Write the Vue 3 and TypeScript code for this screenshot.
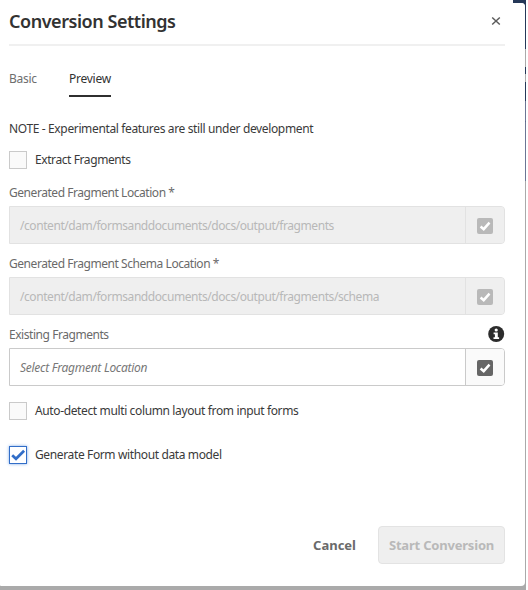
<script setup lang="ts">
import { ref } from 'vue'

interface PathField {
  id: string
  label: string
  text: string
  disabled: boolean
  info: boolean
}

const activeTab = ref('Preview')
const tabs = ['Basic', 'Preview']
const fields: PathField[] = [
  { id: 'location', label: 'Generated Fragment Location *', text: '/content/dam/formsanddocuments/docs/output/fragments', disabled: true, info: false },
  { id: 'schema', label: 'Generated Fragment Schema Location *', text: '/content/dam/formsanddocuments/docs/output/fragments/schema', disabled: true, info: false },
  { id: 'existing', label: 'Existing Fragments', text: 'Select Fragment Location', disabled: false, info: true },
]
const extract = ref(false)
const autoDetect = ref(false)
const withoutModel = ref(true)
</script>

<template>
  <div class="stage">
    <main class="dialog">
      <header class="head">
        <h1>Conversion Settings</h1>
        <button class="close" aria-label="Close">
          <svg width="10" height="10" viewBox="0 0 10 10"><path d="M1.2 1.5 8.8 8.5M8.8 1.5 1.2 8.5" fill="none" stroke="#5c5c5c" stroke-width="1.5" /></svg>
        </button>
      </header>

      <nav class="tabs">
        <button v-for="t in tabs" :key="t" class="tab" :class="[t.toLowerCase(), { active: t === activeTab }]" @click="activeTab = t">{{ t }}</button>
      </nav>

      <p class="note">NOTE - Experimental features are still under development</p>

      <div class="check" @click="extract = !extract">
        <span class="box" :class="{ on: extract }" />
        <span class="extract">Extract Fragments</span>
      </div>

      <section v-for="f in fields" :key="f.id" class="field" :class="[f.id, { disabled: f.disabled }]">
        <div class="label">
          <span>{{ f.label }}</span>
          <svg v-if="f.info" width="17" height="16" viewBox="0 0 17 16">
            <circle cx="8.2" cy="8" r="8" fill="#2c2c2c" />
            <circle cx="8.2" cy="4" r="1.6" fill="#fff" />
            <path d="M5.6 6.5h4.2v4.8h1.3v1.7H5.5v-1.7h1.4V8.2H5.6z" fill="#fff" />
          </svg>
        </div>
        <div class="control">
          <span class="value">{{ f.text }}</span>
          <span class="pick">
            <svg width="16" height="16" viewBox="0 0 16 16">
              <rect width="16" height="16" rx="2" class="tile" />
              <path d="M3.6 8.5 6.7 11.2 12.5 4.7" fill="none" class="tick" stroke-width="2.5" />
            </svg>
          </span>
        </div>
      </section>

      <div class="check auto" @click="autoDetect = !autoDetect">
        <span class="box" :class="{ on: autoDetect }" />
        <span>Auto-detect multi column layout from input forms</span>
      </div>
      <div class="check model" @click="withoutModel = !withoutModel">
        <span class="box" :class="{ on: withoutModel }">
          <svg v-if="withoutModel" width="16" height="16" viewBox="0 0 16 16"><path d="M2.2 8.2 6 11.8 14.1 3.8" fill="none" stroke="#326ec8" stroke-width="2.7" /></svg>
        </span>
        <span>Generate Form without data model</span>
      </div>

      <footer class="foot">
        <button class="cancel">Cancel</button>
        <button class="start" disabled>Start Conversion</button>
      </footer>
    </main>
    <div class="backdrop" />
  </div>
</template>

<style>
body {
  margin: 0;
  background: #fff;
}
</style>

<style scoped>
.stage {
  display: flex;
  width: 526px;
  height: 590px;
  background: #aaa;
  font: 12px/18px 'Noto Sans', 'Open Sans', sans-serif;
  color: #3a3a3a;
}
.dialog {
  box-sizing: border-box;
  display: flex;
  flex-direction: column;
  width: 525px;
  height: 586px;
  padding: 0 20px 22px 9px;
  background: #fff;
  border-radius: 0 0 4px 1px;
  position: relative;
}
.dialog::after {
  content: '';
  position: absolute;
  top: 0;
  right: 0;
  width: 12px;
  height: 6px;
  background: radial-gradient(circle at 9px 6px, transparent 3px, #253858 3.5px) right / 3px 6px no-repeat, linear-gradient(#253858 3px, transparent 3px);
  background: linear-gradient(#253858 3px, transparent 3px), radial-gradient(circle at 0 100%, transparent 2.5px, #253858 3.5px) right bottom / 3px 3px no-repeat;
}
.backdrop {
  width: 1px;
  height: 590px;
  background: linear-gradient(#253858 49px, #aaa 49px 67px, #253858 67px 74px, #aaa 74px 82px, #253858 82px 101px, #6b7694 101px 121px, #59658a 121px 122px, #6b7694 122px 181px, #aaa 181px);
}
button {
  margin: 0;
  padding: 0;
  border: 0;
  background: none;
  font: inherit;
  color: inherit;
}
.head {
  display: flex;
  justify-content: space-between;
  align-items: center;
  height: 44px;
  flex: none;
  border-bottom: 2px solid #f0f0f0;
}
h1 {
  margin: 0;
  font-size: 18px;
  font-weight: 600;
  line-height: 24px;
  letter-spacing: -0.46px;
  padding-bottom: 3px;
  color: #323232;
}
.close {
  display: flex;
  margin-right: 4px;
  padding-bottom: 2px;
}
.tabs {
  display: flex;
  gap: 32px;
  margin-top: 24px;
}
.tab {
  box-sizing: border-box;
  height: 27px;
  padding-bottom: 7px;
  border-bottom: 2px solid transparent;
  color: #6e6e6e;
  line-height: 18px;
  letter-spacing: -0.3px;
  width: 28px;
  text-align: left;
  white-space: nowrap;
}
.tab.preview {
  width: 42px;
  letter-spacing: -0.25px;
}
.tab.active {
  color: #323232;
  border-color: #2f2f2f;
}
.note {
  margin: 23px 0 0;
  letter-spacing: -0.36px;
}
.check {
  display: flex;
  align-items: center;
  gap: 8px;
  height: 18px;
  margin-top: 13px;
  letter-spacing: -0.37px;
}
.extract {
  letter-spacing: -0.41px;
}
.box {
  box-sizing: border-box;
  width: 18px;
  height: 18px;
  border: 1px solid #cacaca;
  background: #fafafa;
}
.box svg {
  display: block;
}
.box.on {
  border-color: #326ec8;
  background: #fff;
  box-shadow: 0 0 3px #7fa9e8;
}
.field {
  margin-top: 11px;
}
.check + .field {
  margin-top: 15px;
}
.label {
  display: flex;
  justify-content: space-between;
  height: 22px;
  color: #6a6a6a;
  letter-spacing: -0.45px;
}
.control {
  box-sizing: border-box;
  display: flex;
  height: 38px;
  border: 1px solid #cacaca;
  border-radius: 0 4px 4px 0;
  overflow: hidden;
}
.value {
  flex: 1;
  padding-left: 10px;
  line-height: 38px;
  font-style: italic;
  color: #777;
  letter-spacing: -0.27px;
  white-space: nowrap;
}
.pick {
  box-sizing: border-box;
  width: 39px;
  border-left: 1px solid #cacaca;
  padding: 11px 0 0 11px;
  background: #fafafa;
}
.pick svg {
  display: block;
}
.tile {
  fill: #666;
}
.tick {
  stroke: #fff;
}
.disabled .control,
.disabled .pick {
  border-color: #e2e2e2;
  background: #efefef;
}
.disabled .value {
  color: #b8b8b8;
  font-style: normal;
  letter-spacing: -0.43px;
}
.disabled .tile {
  fill: #b9b9b9;
}
.check.auto {
  margin-top: 16px;
}
.check.model {
  margin-top: 26px;
}
.foot {
  display: flex;
  justify-content: flex-end;
  align-items: center;
  gap: 22px;
  margin-top: auto;
  font-size: 13px;
  font-weight: 700;
}
.cancel {
  color: #6a6a6a;
}
.start {
  box-sizing: border-box;
  width: 127px;
  height: 38px;
  border: 1px solid #e3e3e3;
  border-radius: 4px;
  background: #efefef;
  color: #b9b9b9;
  letter-spacing: -0.2px;
}
</style>
